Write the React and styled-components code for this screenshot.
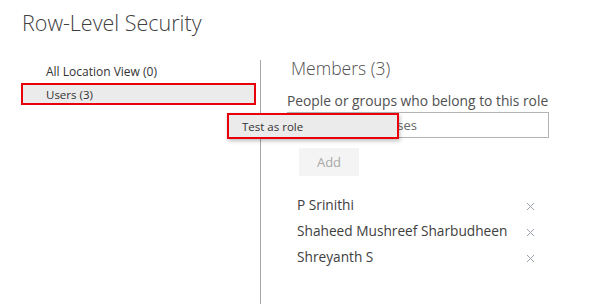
import React from "react";
import styled, { createGlobalStyle } from "styled-components";

const Global = createGlobalStyle`
  html, body { margin: 0; padding: 0; background: #fff; }
  body { font-family: "Open Sans", "Noto Sans", sans-serif; width: 589px; height: 304px; overflow: hidden; }
  * { box-sizing: border-box; }
`;

const Page = styled.div`
  position: relative;
  width: 589px;
  height: 304px;
  padding-top: 9px;
`;

const Title = styled.h1`
  margin: 0 0 0 22px;
  font-size: 21.5px;
  font-weight: 300;
  color: #404040;
  line-height: 28px;
`;

const Columns = styled.div`
  display: flex;
  height: 267px;
`;

const Sidebar = styled.div`
  width: 260px;
  padding: 23px 0 0 21px;
  display: flex;
  flex-direction: column;
`;

const RoleItem = styled.div`
  width: 235px;
  height: 22px;
  display: flex;
  align-items: center;
  padding-left: ${p => (p.$selected ? "23px" : "25px")};
  font-size: ${p => (p.$selected ? "11.5px" : "12px")};
  color: #333;
  background: ${p => (p.$selected ? "#ebebeb" : "transparent")};
  border: ${p => (p.$selected ? "2px solid #e8000b" : "none")};
  margin-bottom: 1px;
`;

const Divider = styled.div`
  width: 1px;
  background: #a6a6a6;
  margin-top: 23px;
`;

const Main = styled.div`
  flex: 1;
  padding: 19px 0 0 26px;
  display: flex;
  flex-direction: column;
`;

const SectionTitle = styled.h2`
  margin: 0 0 0 4px;
  font-size: 17.5px;
  font-weight: 300;
  color: #505050;
  line-height: 24px;
`;

const Label = styled.div`
  margin-top: 12px;
  font-size: 13.8px;
  color: #505050;
  line-height: 18px;
  white-space: nowrap;
`;

const Input = styled.div`
  margin-top: 2px;
  width: 262px;
  height: 26px;
  border: 1px solid #b4b4b4;
  display: flex;
  align-items: center;
  padding-left: 31px;
  font-size: 13px;
  color: #666;
`;

const AddButton = styled.div`
  margin: 10px 0 0 12px;
  width: 60px;
  height: 28px;
  background: #f4f4f4;
  color: #a8a8a8;
  font-size: 13px;
  display: flex;
  align-items: center;
  justify-content: center;
`;

const MemberList = styled.div`
  margin-top: 15px;
  display: flex;
  flex-direction: column;
`;

const Member = styled.div`
  display: flex;
  align-items: center;
  height: 26px;
  width: 248px;
  padding-left: 10px;
  font-size: 13.7px;
  color: #404040;
`;

const Name = styled.span`
  flex: 1;
`;

const Remove = styled.span`
  width: 10px;
  display: flex;
  justify-content: center;
  margin-top: 5px;
`;

const ContextMenu = styled.div`
  position: absolute;
  left: 227px;
  top: 113px;
  width: 172px;
  height: 26px;
  background: #ebebeb;
  border: 2px solid #e8000b;
  box-shadow: 1px 2px 4px rgba(0, 0, 0, 0.25);
  display: flex;
  align-items: center;
  padding-left: 13px;
  font-size: 11.5px;
  color: #333;
`;

const XIcon = () => (
  <svg width="9" height="9" viewBox="0 0 9 9">
    <path d="M1 1L8 8M8 1L1 8" stroke="#9aa3ad" strokeWidth="1" />
  </svg>
);

const members = ["P Srinithi", "Shaheed Mushreef Sharbudheen", "Shreyanth S"];

export default function App() {
  return (
    <>
      <Global />
      <Page>
        <Title>Row-Level Security</Title>
        <Columns>
          <Sidebar>
            <RoleItem>All Location View (0)</RoleItem>
            <RoleItem $selected>Users (3)</RoleItem>
          </Sidebar>
          <Divider />
          <Main>
            <SectionTitle>Members (3)</SectionTitle>
            <Label>People or groups who belong to this role</Label>
            <Input>Email addresses</Input>
            <AddButton>Add</AddButton>
            <MemberList>
              {members.map(m => (
                <Member key={m}>
                  <Name>{m}</Name>
                  <Remove><XIcon /></Remove>
                </Member>
              ))}
            </MemberList>
          </Main>
        </Columns>
        <ContextMenu>Test as role</ContextMenu>
      </Page>
    </>
  );
}
